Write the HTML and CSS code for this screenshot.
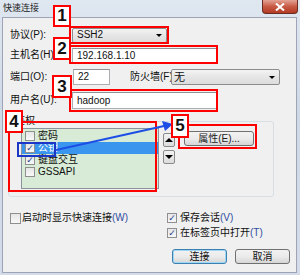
FILE: index.html
```html
<!DOCTYPE html>
<html lang="zh-CN">
<head>
    <meta charset="UTF-8">
    <title>快速连接</title>
    <link rel="stylesheet" href="styles.css">
</head>
<body>
    <div class="window">
        <div class="titlebar">
            <span class="title">快速连接</span>
            <span class="close">
                <svg width="10" height="8" viewBox="0 0 10 8"><path d="M1 0.5 L9 7.5 M9 0.5 L1 7.5" stroke="#fff" stroke-width="2"/></svg>
            </span>
        </div>

        <div class="client">
            <div class="row row-proto">
                <span class="label">协议(P):</span>
                <div class="combo combo-proto"><span>SSH2</span><i class="arrow"></i></div>
            </div>
            <div class="row row-host">
                <span class="label">主机名(H):</span>
                <div class="edit edit-host">192.168.1.10</div>
            </div>
            <div class="row row-port">
                <span class="label">端口(O):</span>
                <div class="edit edit-port">22</div>
                <span class="label label-fw">防火墙(F):</span>
                <div class="combo combo-fw"><span>无</span><i class="arrow"></i></div>
            </div>
            <div class="row row-user">
                <span class="label">用户名(U):</span>
                <div class="edit edit-user">hadoop</div>
            </div>

            <fieldset class="group">
                <legend>鉴权</legend>
                <div class="group-body">
                    <div class="list">
                        <div class="item"><span class="check"></span>密码</div>
                        <div class="item selected"><span class="check on">✓</span>公钥</div>
                        <div class="item"><span class="check on">✓</span>键盘交互</div>
                        <div class="item"><span class="check"></span>GSSAPI</div>
                    </div>
                    <div class="updown">
                        <span class="btn-small"><i class="tri up"></i></span>
                        <span class="btn-small"><i class="tri"></i></span>
                    </div>
                    <div class="btn btn-prop">属性(E)...</div>
                </div>
            </fieldset>

            <div class="bottom">
                <div class="col-left">
                    <div class="opt"><span class="check"></span>启动时显示快速连接<span class="key">(W)</span></div>
                </div>
                <div class="col-right">
                    <div class="opt"><span class="check on">✓</span>保存会话<span class="key">(V)</span></div>
                    <div class="opt"><span class="check on">✓</span>在标签页中打开<span class="key">(T)</span></div>
                    <div class="buttons">
                        <div class="btn btn-default">连接</div>
                        <div class="btn">取消</div>
                    </div>
                </div>
            </div>
        </div>

        <!-- anotaciones -->
        <div class="mark mark-1"></div>
        <div class="mark mark-2"></div>
        <div class="mark mark-3"></div>
        <div class="mark mark-4"></div>
        <div class="mark mark-5"></div>
        <div class="focus-rect"></div>
        <svg class="arrow-line" width="300" height="275" viewBox="0 0 300 275">
            <line x1="56" y1="150" x2="164" y2="126" stroke="#1d4fe6" stroke-width="2"/>
            <polygon points="173,124 162,121 165,131" fill="#1d4fe6"/>
        </svg>
        <div class="num num-1">1</div>
        <div class="num num-2">2</div>
        <div class="num num-3">3</div>
        <div class="num num-4">4</div>
        <div class="num num-5">5</div>
    </div>
</body>
</html>
```

FILE: styles.css
```css
body {
    margin: 0;
    font-family: "Liberation Sans", "Noto Sans CJK SC", sans-serif;
    font-size: 10px;
    color: #111;
    background: #fff;
}
.window {
    position: relative;
    width: 300px;
    height: 275px;
    background: linear-gradient(#dfe7f1, #cfd9e6 40%, #d3dce8);
    overflow: hidden;
}
.titlebar {
    height: 17px;
    display: flex;
    justify-content: space-between;
}
.title {
    padding: 3px 0 0 3px;
    line-height: 11px;
    font-size: 9px;
    color: #1e1e1e;
}
.close {
    width: 34px;
    height: 13px;
    margin-right: 2px;
    background: linear-gradient(#e4a294, #c75a45 50%, #b33a24);
    border: 1px solid #6b2a22;
    border-top: none;
    border-radius: 0 0 4px 4px;
    display: flex;
    align-items: center;
    justify-content: center;
}

/* panel interior */
.client {
    margin-left: 2px;
    width: 295px;
    height: 256px;
    box-sizing: border-box;
    border: 1px solid #9ea3b6;
    background: #f0f0f0;
    padding: 7px 0 0 7px;
}
.row {
    display: flex;
    align-items: center;
    height: 20px;
}
.row-port { margin-top: 2px; }
.row-user { margin-top: 3px; }
.label {
    width: 62px;
    flex: none;
    line-height: 12px;
    white-space: nowrap;
}
.label-fw {
    width: 41px;
    margin-left: 20px;
}
.edit {
    box-sizing: border-box;
    background: #fff;
    border: 1px solid #abadb3;
    border-top-color: #8e9198;
    padding: 0 4px;
    line-height: 13px;
    font-size: 10px;
}
.edit-host { width: 145px; height: 15px; }
.edit-port { width: 37px; height: 16px; margin-left: 1px; }
.edit-user { width: 145px; height: 17px; line-height: 15px; }
.combo {
    box-sizing: border-box;
    display: flex;
    align-items: center;
    justify-content: space-between;
    background: linear-gradient(#f3f3f3, #e6e6e6 50%, #dcdcdc);
    border: 1px solid #8c8c8c;
    border-radius: 2px;
    padding: 0 4px;
    line-height: 12px;
}
.combo-proto { width: 95px; height: 15px; }
.combo-fw { width: 109px; height: 16px; padding-left: 2px; }
.combo-fw span { font-size: 11px; }
.arrow {
    width: 0;
    height: 0;
    border-left: 3px solid transparent;
    border-right: 3px solid transparent;
    border-top: 3px solid #000;
}

/* grupo de autenticacion */
.group {
    margin: 5px 0 0 -2px;
    padding: 0 0 0 12px;
    width: 266px;
    height: 82px;
    box-sizing: border-box;
    border: 1px solid #d5dfe5;
    border-radius: 3px;
}
.group legend {
    margin-left: -8px;
    padding: 0 2px;
    line-height: 12px;
}
.group-body {
    display: flex;
    align-items: flex-start;
    padding-top: 1px;
}
.list {
    width: 138px;
    height: 61px;
    box-sizing: border-box;
    border: 1px solid #8d939c;
    background: #d7ebd6;
    padding-top: 1px;
}
.item {
    display: flex;
    align-items: center;
    height: 12px;
    padding-left: 3px;
    line-height: 12px;
}
.item.selected {
    background: #3a95ee;
    color: #fff;
}
.check {
    flex: none;
    width: 10px;
    height: 10px;
    box-sizing: border-box;
    border: 1px solid #8f8f8f;
    background: linear-gradient(#e6e6e6, #f8f8f8);
    margin-right: 3px;
    font-size: 9px;
    line-height: 8px;
    text-align: center;
    color: #2b3f8c;
    font-family: "DejaVu Sans", sans-serif;
}
.updown {
    display: flex;
    flex-direction: column;
    gap: 3px;
    margin: 5px 0 0 4px;
}
.btn-small {
    width: 12px;
    height: 14px;
    box-sizing: border-box;
    border: 1px solid #8a8a8a;
    border-radius: 2px;
    background: linear-gradient(#f3f3f3, #dcdcdc);
    display: flex;
    align-items: center;
    justify-content: center;
}
.tri {
    width: 0;
    height: 0;
    border-left: 4px solid transparent;
    border-right: 4px solid transparent;
    border-top: 4px solid #000;
}
.tri.up {
    border-top: none;
    border-bottom: 4px solid #000;
}
.btn {
    box-sizing: border-box;
    height: 15px;
    border: 1px solid #707070;
    border-radius: 3px;
    background: linear-gradient(#f2f2f2, #ebebeb 50%, #d6d6d6);
    text-align: center;
    line-height: 13px;
}
.btn-prop {
    width: 70px;
    margin: 3px 0 0 9px;
    color: #222;
}

/* parte inferior */
.bottom {
    display: flex;
    margin-top: 15px;
}
.col-left {
    width: 157px;
    flex: none;
}
.col-right {
    display: flex;
    flex-direction: column;
    gap: 3px;
}
.opt {
    display: flex;
    align-items: center;
    height: 12px;
    line-height: 12px;
    white-space: nowrap;
}
.col-left .check { width: 11px; height: 11px; margin-right: 1px; }
.key { color: #2f4da0; }
.buttons {
    display: flex;
    gap: 8px;
    margin: 7px 0 0 5px;
}
.buttons .btn { width: 55px; }
.btn-default {
    width: 54px;
    border-color: #3c7fb1;
    box-shadow: inset 0 0 0 1px #9fd7f5;
}

/* anotaciones */
.mark {
    position: absolute;
    box-sizing: border-box;
    border: 2px solid #f00;
}
.mark-1 { left: 69px; top: 26px; width: 100px; height: 18px; }
.mark-2 { left: 69px; top: 45px; width: 149px; height: 19px; }
.mark-3 { left: 69px; top: 89px; width: 149px; height: 23px; }
.mark-4 { left: 8px; top: 121px; width: 149px; height: 71px; }
.mark-5 { left: 178px; top: 124px; width: 79px; height: 25px; }
.focus-rect {
    position: absolute;
    left: 17px;
    top: 142px;
    width: 39px;
    height: 15px;
    box-sizing: border-box;
    border: 2px solid #1c36c8;
}
.arrow-line {
    position: absolute;
    left: 0;
    top: 0;
}
.num {
    position: absolute;
    box-sizing: border-box;
    border: 2px solid #f00;
    background: #fff;
    font: bold 17px "Liberation Sans", sans-serif;
    text-align: center;
    display: flex;
    align-items: center;
    justify-content: center;
}
.num-1 { left: 53px; top: 5px; width: 18px; height: 22px; }
.num-2 { left: 53px; top: 37px; width: 18px; height: 23px; }
.num-3 { left: 52px; top: 75px; width: 20px; height: 23px; }
.num-4 { left: 5px; top: 110px; width: 18px; height: 23px; }
.num-5 { left: 171px; top: 114px; width: 18px; height: 24px; }
```
